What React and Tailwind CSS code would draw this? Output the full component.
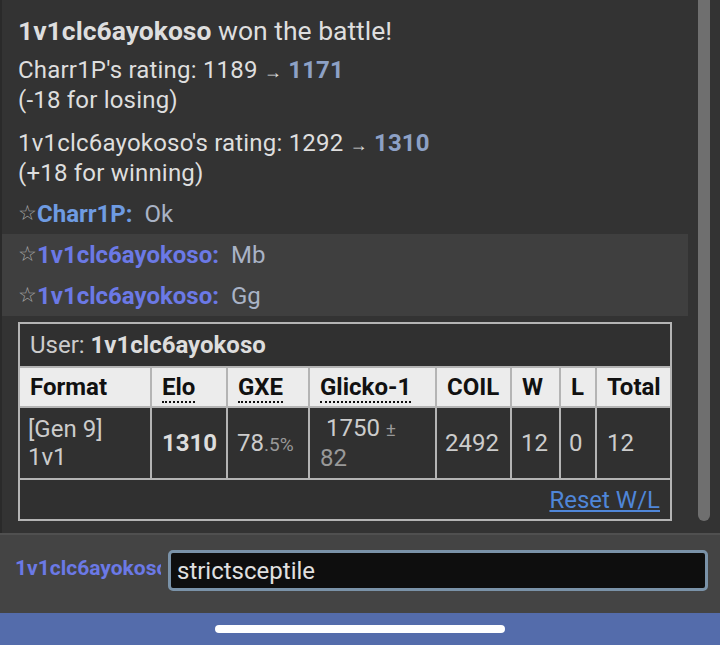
import React from "react";

const Star = () => <span className="text-[21px] leading-none text-[#a8a8a8]">☆</span>;

const ChatLine = ({ name, nameColor, text }) => (
  <div className="h-[41px] flex items-center pl-[16px]">
    <Star />
    <strong className={`font-bold ${nameColor}`}>{name}:</strong>
    <span className="ml-[12px] text-[#a9b3c6]">{text}</span>
  </div>
);

const Arrow = () => <span className="text-[18px] leading-none">→</span>;

const App = () => {
  return (
    <div
      className="w-[720px] h-[645px] bg-[#333333] flex flex-col overflow-hidden text-[24px] text-[#dedede]"
      style={{ fontFamily: "Roboto, 'Liberation Sans', sans-serif" }}
    >
      {/* battle log */}
      <div className="flex-1 flex min-h-0">
        <div className="flex-1 border-l-2 border-[#2a2a2a] pt-[16px]">
          <div className="h-[30px] leading-[30px] px-[16px] text-[26.5px]">
            <strong className="font-bold">1v1clc6ayokoso</strong> won the battle!
          </div>
          <div className="px-[16px] mt-[9px] tracking-[0.2px]">
            <div className="h-[30px] leading-[30px]">
              Charr1P's rating: 1189 <Arrow />{" "}
              <strong className="font-bold text-[#8da1c6]">1171</strong>
            </div>
            <div className="h-[30px] leading-[30px]">(-18 for losing)</div>
          </div>
          <div className="px-[16px] mt-[13px] tracking-[0.2px]">
            <div className="h-[30px] leading-[30px]">
              1v1clc6ayokoso's rating: 1292 <Arrow />{" "}
              <strong className="font-bold text-[#8da1c6]">1310</strong>
            </div>
            <div className="h-[30px] leading-[30px]">(+18 for winning)</div>
          </div>
          <div className="mt-[5px]">
            <ChatLine name="Charr1P" nameColor="text-[#6e9be2]" text="Ok" />
          </div>
          <div className="bg-[#3f3f3f]">
            <ChatLine name="1v1clc6ayokoso" nameColor="text-[#6b79e6]" text="Mb" />
            <ChatLine name="1v1clc6ayokoso" nameColor="text-[#6b79e6]" text="Gg" />
          </div>

          <div className="mt-[6px] ml-[16px] w-[654px] border-2 border-[#b4b4b4] bg-[#303030]">
            <div className="h-[42px] flex items-center pl-[10px] text-[#cccccc]">
              User:&nbsp;<strong className="font-bold text-[#dddddd]">1v1clc6ayokoso</strong>
            </div>
            <table className="w-full table-fixed border-collapse">
              <colgroup>
                <col className="w-[131px]" />
                <col className="w-[76px]" />
                <col className="w-[82px]" />
                <col className="w-[127px]" />
                <col className="w-[75px]" />
                <col className="w-[49px]" />
                <col className="w-[36px]" />
                <col />
              </colgroup>
              <thead>
                <tr className="bg-[#ececec] text-[#111111] h-[40px]">
                  <th className="text-left font-bold pl-[10px] py-0 leading-[36px] border-2 border-l-0 border-[#b4b4b4]">Format</th>
                  <th className="text-left font-bold pl-[10px] py-0 leading-[36px] border-2 border-[#b4b4b4]">
                    <abbr className="no-underline border-b-2 border-dotted border-[#111111]">Elo</abbr>
                  </th>
                  <th className="text-left font-bold pl-[10px] py-0 leading-[36px] border-2 border-[#b4b4b4]">
                    <abbr className="no-underline border-b-2 border-dotted border-[#111111]">GXE</abbr>
                  </th>
                  <th className="text-left font-bold pl-[10px] py-0 leading-[36px] border-2 border-[#b4b4b4]">
                    <abbr className="no-underline border-b-2 border-dotted border-[#111111]">Glicko-1</abbr>
                  </th>
                  <th className="text-left font-bold pl-[10px] py-0 leading-[36px] border-2 border-[#b4b4b4]">COIL</th>
                  <th className="text-left font-bold pl-[10px] py-0 leading-[36px] border-2 border-[#b4b4b4]">W</th>
                  <th className="text-left font-bold pl-[10px] py-0 leading-[36px] border-2 border-[#b4b4b4]">L</th>
                  <th className="text-left font-bold pl-[10px] py-0 leading-[36px] border-2 border-r-0 border-[#b4b4b4]">Total</th>
                </tr>
              </thead>
              <tbody>
                <tr className="text-[#cccccc] h-[72px]">
                  <td className="pl-[8px] leading-[28px] border-2 border-l-0 border-[#b4b4b4]">
                    [Gen 9]
                    <br />
                    1v1
                  </td>
                  <td className="pl-[10px] font-bold text-[#dddddd] border-2 border-[#b4b4b4]">1310</td>
                  <td className="pl-[9px] border-2 border-[#b4b4b4]">
                    78<span className="text-[19px] text-[#999999]">.5%</span>
                  </td>
                  <td className="pl-[10px] leading-[28px] border-2 border-[#b4b4b4]">
                    &nbsp;1750 <span className="text-[19px] text-[#999999]">±</span>
                    <br />
                    <span className="text-[#999999]">82</span>
                  </td>
                  <td className="pl-[8px] border-2 border-[#b4b4b4]">2492</td>
                  <td className="pl-[9px] border-2 border-[#b4b4b4]">12</td>
                  <td className="pl-[8px] border-2 border-[#b4b4b4]">0</td>
                  <td className="pl-[10px] border-2 border-r-0 border-[#b4b4b4]">12</td>
                </tr>
              </tbody>
            </table>
            <div className="h-[39px] flex items-center justify-end pr-[10px]">
              <a href="#" className="text-[#4f86d8] underline">Reset W/L</a>
            </div>
          </div>
        </div>
        {/* scrollbar */}
        <div className="w-[12px] mr-[10px] ml-[10px] mb-[12px] rounded-b-full bg-[#6f6f6f]" />
      </div>

      {/* chat input */}
      <div className="h-[80px] shrink-0 border-t-2 border-[#505050] bg-[#444444] flex items-start pt-[15px]">
        <div className="w-[146px] ml-[15px] mt-[3px] overflow-hidden whitespace-nowrap text-[21px] font-bold text-[#6b79e6]">
          1v1clc6ayokoso
        </div>
        <div className="ml-[7px] w-[540px] h-[41px] rounded-[5px] border-[3px] border-[#7a92a8] bg-[#0e0e0e] flex items-center px-[6px] text-[#e0e0e0] text-[24px]">
          strictsceptile
        </div>
      </div>

      {/* nav bar */}
      <div className="h-[32px] shrink-0 bg-[#546cab] flex items-center justify-center">
        <div className="w-[290px] h-[8px] rounded-full bg-white" />
      </div>
    </div>
  );
};

export default App;
